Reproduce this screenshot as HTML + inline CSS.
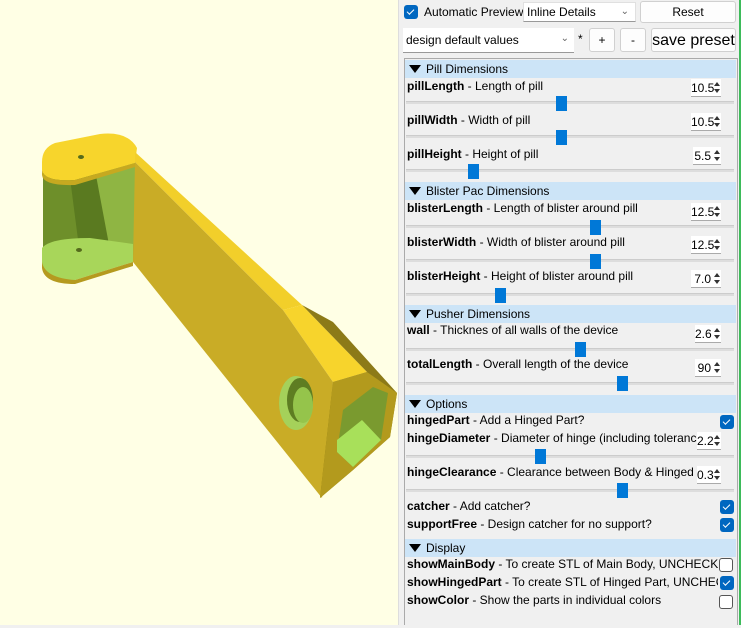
<!DOCTYPE html>
<html><head><meta charset="utf-8"><style>
*{box-sizing:border-box;margin:0;padding:0}
body{width:741px;height:625px;overflow:hidden;background:#f0f0f0;font-family:"Liberation Sans",sans-serif;font-size:12px;color:#000;position:relative}
.a{position:absolute}
#view{left:0;top:0;width:398px;height:625px;background:#ffffe5}
.btn{background:#fdfdfd;border:1px solid #d0d0d0;border-radius:3px;text-align:center;white-space:nowrap}
.cb{width:14px;height:14px;border-radius:3px;background:#0067c0;}
.cb:after{content:"";position:absolute;left:3px;top:4px;width:6px;height:3px;border-left:1.5px solid #fff;border-bottom:1.5px solid #fff;transform:rotate(-45deg)}
.cbe{width:14px;height:14px;border-radius:3px;border:1px solid #555;background:#fff}
.hdr{left:405px;width:331px;height:18px;background:#cce4f7;font-size:12px;line-height:18px;padding-left:4px}
.hdr:before{content:"";display:inline-block;width:0;height:0;border-left:6px solid transparent;border-right:6px solid transparent;border-top:8px solid #000;margin-right:5px;vertical-align:0px}
.lb{left:407px;width:292px;white-space:nowrap;overflow:hidden;font-size:12px;line-height:15px}
.lb b{font-weight:bold}
.trk{left:406px;width:328px;height:3px;background:#ddd;border-top:1px solid #ccc}
.hd{width:11px;height:15px;background:#0078d7}
.sp{height:18px;background:#fff;border-bottom:1px solid #aaa;text-align:right;font-size:12px;line-height:18px;padding-right:10px;right:20px;white-space:nowrap}
.sp:after{content:"";position:absolute;right:1px;top:3px;width:0;height:0;border-left:3px solid transparent;border-right:3px solid transparent;border-bottom:4px solid #333}
.sp:before{content:"";position:absolute;right:1px;top:10px;width:0;height:0;border-left:3px solid transparent;border-right:3px solid transparent;border-top:4px solid #333}
</style></head><body>
<div class="a" id="view">
<svg width="398" height="625" viewBox="0 0 398 625">
<polygon points="43,172 135,160 135,262 43,250" fill="#6e8f2a"/>
<polygon points="70,178 135,160 135,262 80,255" fill="#5a7a20"/>
<polygon points="95,170 135,160 135,262 110,250" fill="#8fb543"/>
<path d="M42,248 Q50,238 90,238 L133,244 L133,262 L75,280 Q45,282 42,266 Z" fill="#a8d65a"/>
<path d="M42,262 Q45,278 75,280 L133,262 L133,266 L75,284 Q44,284 42,268 Z" fill="#b59a1f"/>
<ellipse cx="79" cy="250" rx="3" ry="2" fill="#556b1c"/>
<path d="M42,162 Q42,148 55,143 L100,134 Q128,131 137,148 L135,163 L75,180 Q44,182 42,170 Z" fill="#f7d52c"/>
<path d="M42,170 Q44,182 75,180 L135,163 L135,167 L75,185 Q43,186 42,175 Z" fill="#c6a920"/>
<ellipse cx="81" cy="157" rx="3" ry="2" fill="#556b1c"/>
<polygon points="135,152 135,162 283,310 302,305" fill="#f2cf2a"/>
<polygon points="283,310 302,305 367,372 333,382" fill="#f7d42c"/>
<polygon points="135,162 133,262 322,498 333,382 283,310" fill="#c9ac26"/>
<polygon points="302,305 333,322 397,393 390,437 353,470 320,498 333,382 367,372" fill="#8c7a18"/>
<polygon points="367,372 397,393 390,437 353,470 320,498 333,382" fill="#b39a1d"/>
<polygon points="343,410 373,387 388,393 381,440 353,467 337,452" fill="#7a9a2f"/>
<polygon points="337,440 362,420 381,440 353,467 337,452" fill="#a8e05a"/>
<ellipse cx="296" cy="403" rx="17" ry="27" fill="#a5d15a"/>
<ellipse cx="300" cy="400" rx="13" ry="22" fill="#5e7d22"/>
<ellipse cx="303" cy="405" rx="10" ry="18" fill="#95c44b"/>
</svg>
</div>
<div class="a" style="left:398px;top:0;width:1px;height:625px;background:#ddd"></div>
<div class="a" style="left:739px;top:0;width:2px;height:625px;background:#3dbb5a"></div>

<div class="a cb" style="left:404px;top:5px"></div>
<div class="a" style="left:424px;top:5px;font-size:12px;white-space:nowrap">Automatic Preview</div>
<div class="a" style="left:523px;top:2px;width:113px;height:20px;background:#fff;border:1px solid #e0e0e0;border-bottom:1px solid #999;font-size:12px;line-height:18px;padding-left:3px">Inline Details<span style="position:absolute;right:6px;top:0;color:#666;font-size:10px">&#8964;</span></div>
<div class="a btn" style="left:640px;top:1px;width:96px;height:22px;line-height:21px;font-size:12px">Reset</div>
<div class="a" style="left:403px;top:28px;width:171px;height:25px;background:#fff;border-bottom:1px solid #999;font-size:12px;line-height:25px;padding-left:3px">design default values<span style="position:absolute;right:5px;top:-2px;color:#666;font-size:10px">&#8964;</span></div>
<div class="a" style="left:578px;top:32px;font-size:12px">*</div>
<div class="a btn" style="left:589px;top:28px;width:26px;height:24px;line-height:23px">+</div>
<div class="a btn" style="left:620px;top:28px;width:26px;height:24px;line-height:23px">-</div>
<div class="a btn" style="left:651px;top:28px;width:85px;height:24px;line-height:24px;font-size:16px">save preset</div>

<div class="a" style="left:404px;top:58px;width:334px;height:567px;border:1px solid #aaa;border-bottom:none;background:#f0f0f0"></div>

<div class="a hdr" style="top:60px">Pill Dimensions</div>
<div class="a lb" style="top:79px"><b>pillLength</b> - Length of pill</div>
<div class="a sp" style="top:79px;width:30px">10.5</div>
<div class="a trk" style="top:101px"></div><div class="a hd" style="left:556px;top:96px"></div>
<div class="a lb" style="top:113px"><b>pillWidth</b> - Width of pill</div>
<div class="a sp" style="top:113px;width:30px">10.5</div>
<div class="a trk" style="top:135px"></div><div class="a hd" style="left:556px;top:130px"></div>
<div class="a lb" style="top:147px"><b>pillHeight</b> - Height of pill</div>
<div class="a sp" style="top:147px;width:28px">5.5</div>
<div class="a trk" style="top:169px"></div><div class="a hd" style="left:468px;top:164px"></div>

<div class="a hdr" style="top:182px">Blister Pac Dimensions</div>
<div class="a lb" style="top:201px"><b>blisterLength</b> - Length of blister around pill</div>
<div class="a sp" style="top:203px;width:30px">12.5</div>
<div class="a trk" style="top:225px"></div><div class="a hd" style="left:590px;top:220px"></div>
<div class="a lb" style="top:235px"><b>blisterWidth</b> - Width of blister around pill</div>
<div class="a sp" style="top:236px;width:30px">12.5</div>
<div class="a trk" style="top:259px"></div><div class="a hd" style="left:590px;top:254px"></div>
<div class="a lb" style="top:269px"><b>blisterHeight</b> - Height of blister around pill</div>
<div class="a sp" style="top:270px;width:30px">7.0</div>
<div class="a trk" style="top:293px"></div><div class="a hd" style="left:495px;top:288px"></div>

<div class="a hdr" style="top:305px">Pusher Dimensions</div>
<div class="a lb" style="top:323px"><b>wall</b> - Thicknes of all walls of the device</div>
<div class="a sp" style="top:325px;width:26px">2.6</div>
<div class="a trk" style="top:348px"></div><div class="a hd" style="left:575px;top:342px"></div>
<div class="a lb" style="top:357px"><b>totalLength</b> - Overall length of the device</div>
<div class="a sp" style="top:359px;width:26px">90</div>
<div class="a trk" style="top:382px"></div><div class="a hd" style="left:617px;top:376px"></div>

<div class="a hdr" style="top:395px">Options</div>
<div class="a lb" style="top:413px"><b>hingedPart</b> - Add a Hinged Part?</div>
<div class="a cb" style="left:720px;top:415px"></div>
<div class="a lb" style="top:431px"><b>hingeDiameter</b> - Diameter of hinge (including tolerance)</div>
<div class="a sp" style="top:432px;width:24px">2.2</div>
<div class="a trk" style="top:455px"></div><div class="a hd" style="left:535px;top:449px"></div>
<div class="a lb" style="top:465px"><b>hingeClearance</b> - Clearance between Body &amp; Hinged Part</div>
<div class="a sp" style="top:466px;width:24px">0.3</div>
<div class="a trk" style="top:489px"></div><div class="a hd" style="left:617px;top:483px"></div>
<div class="a lb" style="top:499px"><b>catcher</b> - Add catcher?</div>
<div class="a cb" style="left:720px;top:500px"></div>
<div class="a lb" style="top:517px"><b>supportFree</b> - Design catcher for no support?</div>
<div class="a cb" style="left:720px;top:518px"></div>

<div class="a hdr" style="top:539px">Display</div>
<div class="a lb" style="top:557px;width:311px"><b>showMainBody</b> - To create STL of Main Body, UNCHECK other</div>
<div class="a cbe" style="left:719px;top:558px"></div>
<div class="a lb" style="top:575px;width:311px"><b>showHingedPart</b> - To create STL of Hinged Part, UNCHECK</div>
<div class="a cb" style="left:720px;top:576px"></div>
<div class="a lb" style="top:593px"><b>showColor</b> - Show the parts in individual colors</div>
<div class="a cbe" style="left:719px;top:595px"></div>
</body></html>
